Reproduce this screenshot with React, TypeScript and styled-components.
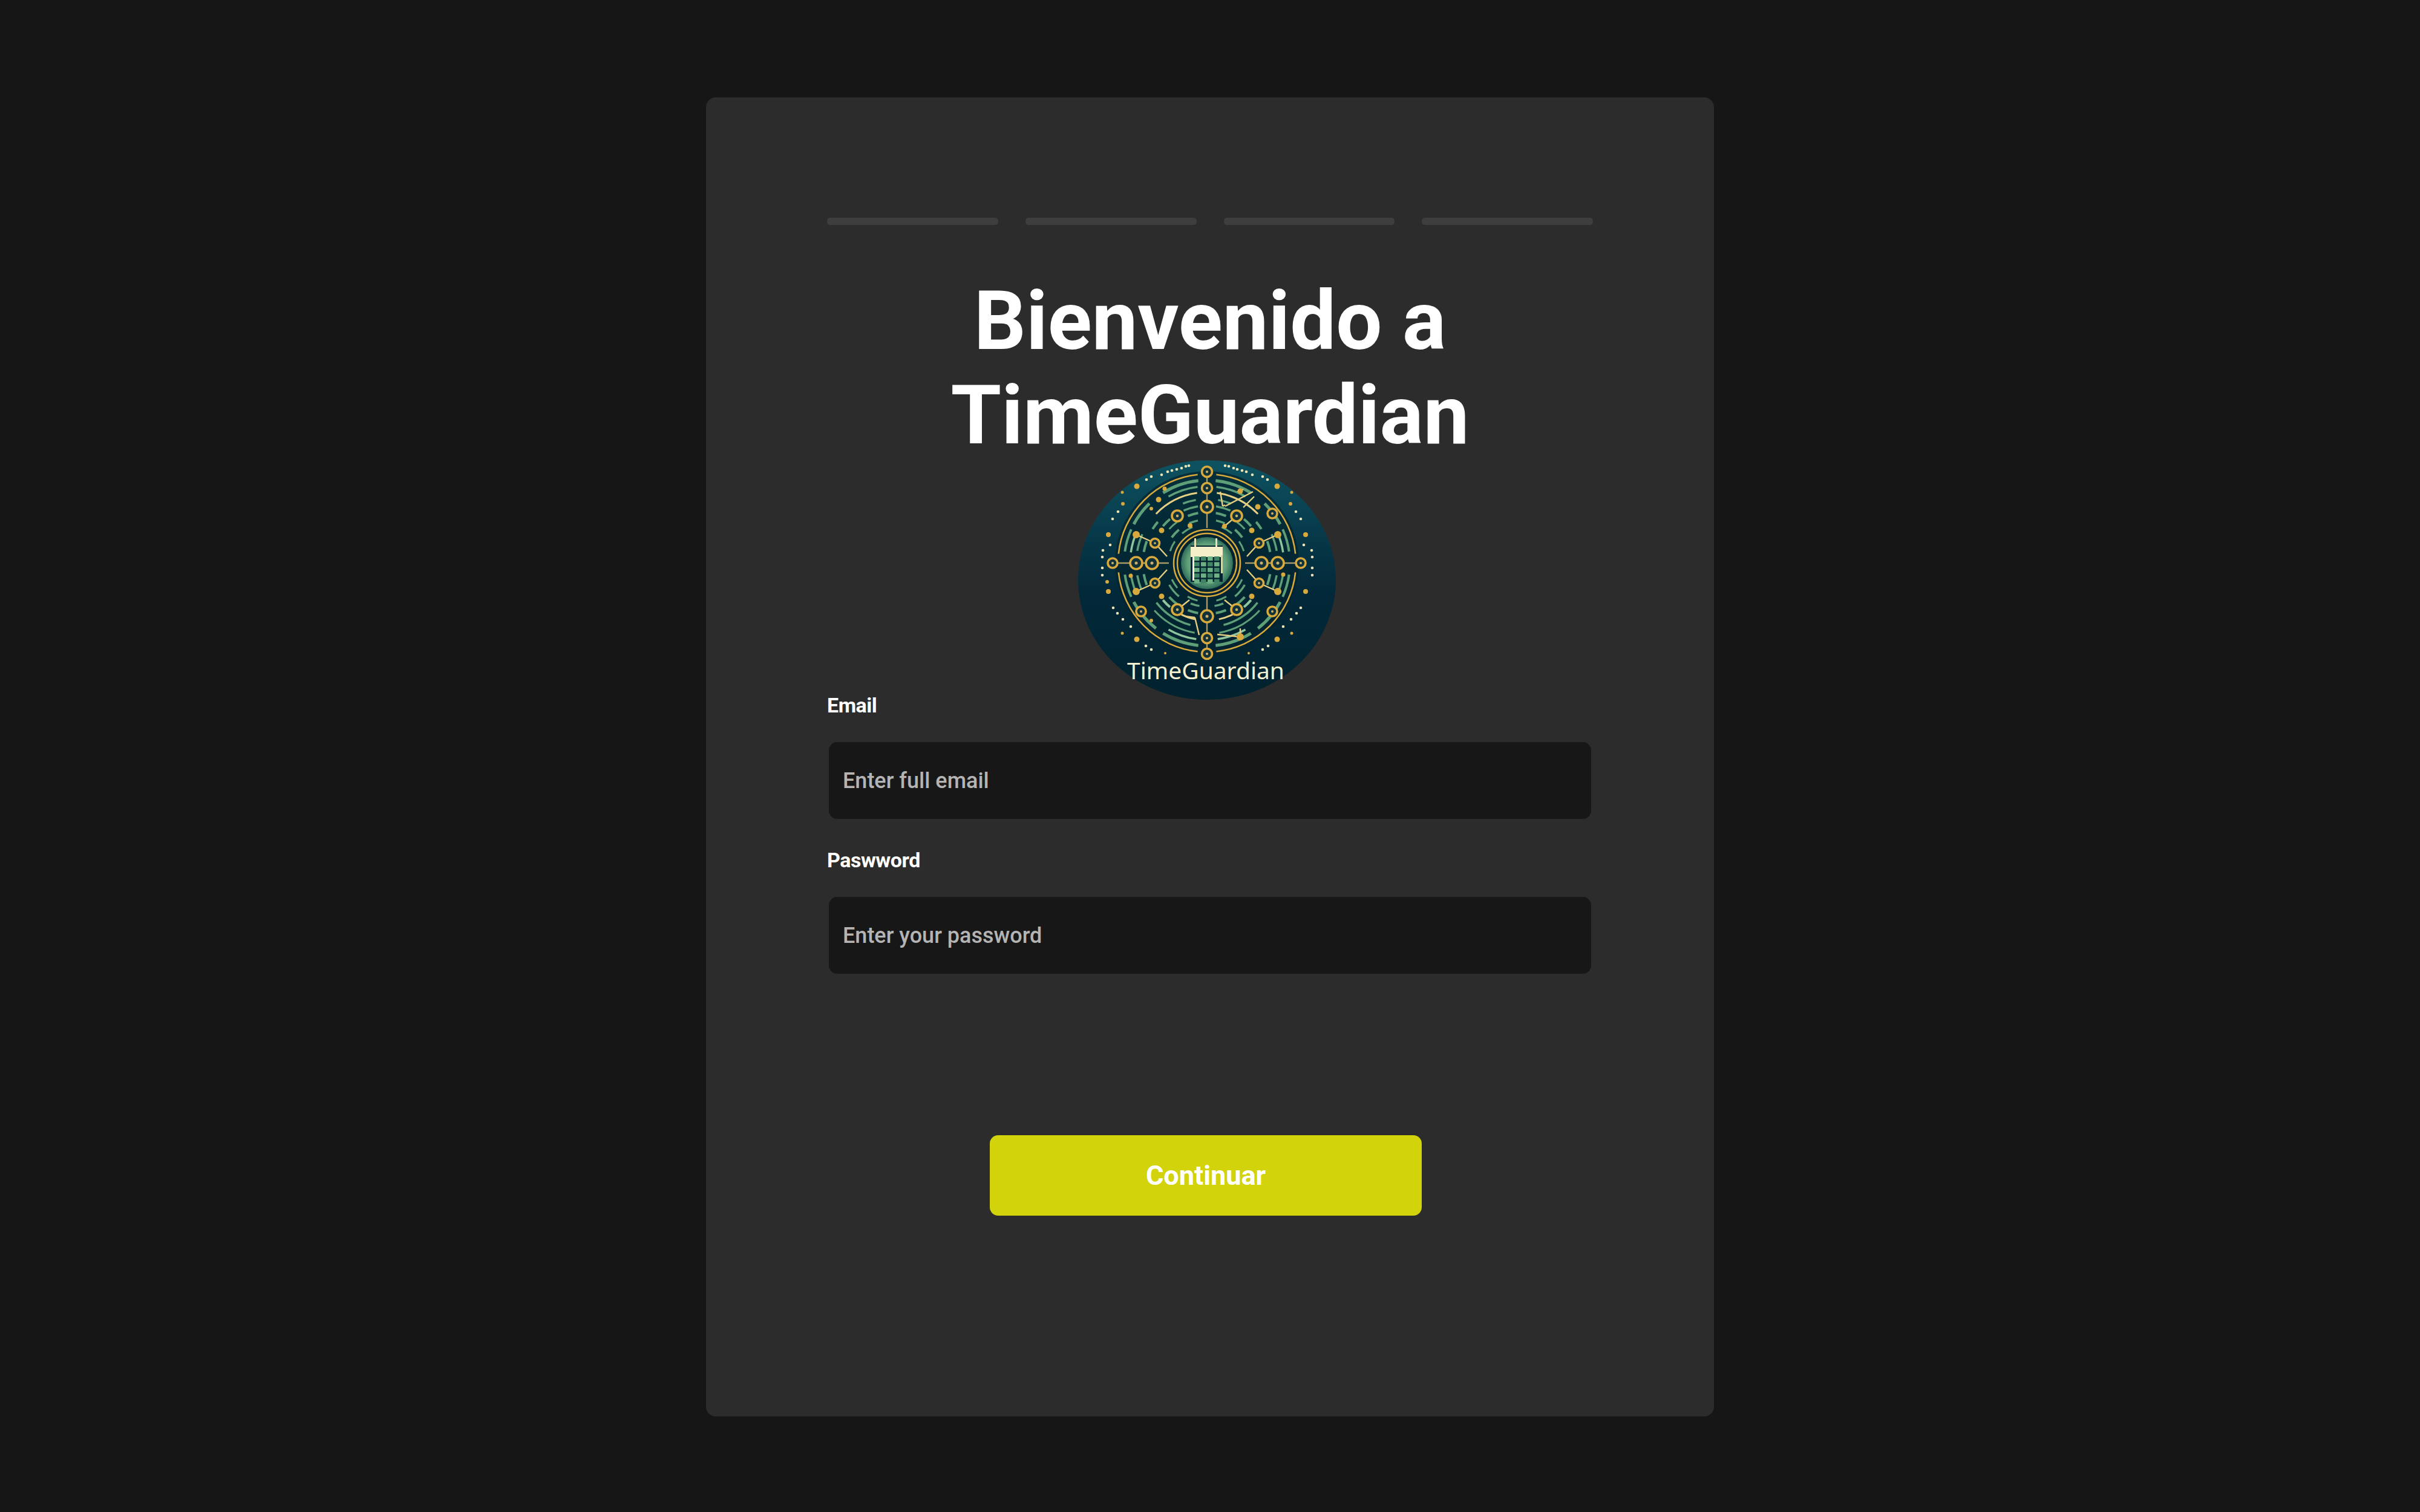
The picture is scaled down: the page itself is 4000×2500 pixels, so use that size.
import React from "react";
import styled, { createGlobalStyle } from "styled-components";

const Global = createGlobalStyle`
  html, body { margin: 0; padding: 0; background: #161616; }
  * { box-sizing: border-box; }
`;

const Page = styled.main`
  width: 4000px;
  height: 2500px;
  padding-top: 161px;
  background: #161616;
  font-family: Roboto, "Liberation Sans", sans-serif;
`;

const Card = styled.section`
  width: 1666px;
  height: 2181px;
  margin: 0 auto;
  padding: 199px 200px 0;
  background: #2c2c2c;
  border-radius: 16px;
`;

const Steps = styled.div`
  display: grid;
  grid-template-columns: repeat(4, 1fr);
  gap: 45px;
  margin-bottom: 81px;
`;

const Step = styled.span`
  height: 12px;
  border-radius: 5px;
  background: #3e3e3e;
`;

const Title = styled.h1`
  margin: 0 0 -5px;
  color: #ffffff;
  font-size: 135px;
  line-height: 156px;
  font-weight: 700;
  text-align: center;
`;

const LogoWrap = styled.div`
  width: 428px;
  height: 398px;
  margin-left: 414px;
`;

const Field = styled.div<{ $gap: number }>`
  margin-top: ${(p) => p.$gap}px;
`;

const Label = styled.label`
  display: block;
  color: #ffffff;
  font-size: 34px;
  line-height: 24px;
  font-weight: 700;
  letter-spacing: -0.5px;
`;

const Input = styled.input`
  display: block;
  width: 1260px;
  height: 127px;
  margin: 49px 3px 0;
  padding: 0 23px;
  border: none;
  outline: none;
  border-radius: 14px;
  background: #171717;
  color: #ffffff;
  font-family: inherit;
  font-size: 36px;
  font-weight: 500;
  &::placeholder {
    color: #b4b4b4;
    opacity: 1;
  }
`;

const Submit = styled.button`
  display: block;
  width: 714px;
  height: 133px;
  margin: 267px 0 0 269px;
  border: none;
  border-radius: 14px;
  background: #d3d30c;
  color: #ffffff;
  font-family: inherit;
  font-size: 45px;
  font-weight: 700;
`;

const CX = 214;
const CY = 171;
const GOLD = "#d8a93c";
const PALE = "#e6cf82";
const GREEN = "#5f9f78";
const LIGHT = "#8fc49c";

const pt = (r: number, deg: number): [number, number] => {
  const a = ((deg - 90) * Math.PI) / 180;
  return [CX + r * Math.cos(a), CY + r * Math.sin(a)];
};

const arc = (r: number, a0: number, a1: number) => {
  const [x0, y0] = pt(r, a0);
  const [x1, y1] = pt(r, a1);
  return `M${x0.toFixed(1)} ${y0.toFixed(1)}A${r} ${r} 0 ${a1 - a0 > 180 ? 1 : 0} 1 ${x1.toFixed(1)} ${y1.toFixed(1)}`;
};

type Band = [number, number, number, number, string];

const bands: Band[] = [
  [147, 6, 84, 2.6, GOLD],
  [147, 96, 174, 2.6, GOLD],
  [137, 6, 32, 5, GREEN],
  [137, 44, 62, 5, GREEN],
  [137, 66, 82, 4, GREEN],
  [137, 98, 114, 4, GREEN],
  [137, 118, 142, 5, GREEN],
  [137, 148, 174, 5, GREEN],
  [127, 7, 30, 3.5, GREEN],
  [127, 98, 112, 3.5, GREEN],
  [127, 66, 82, 3.5, LIGHT],
  [127, 150, 172, 3.5, LIGHT],
  [117, 8, 46, 3, PALE],
  [117, 66, 80, 3.5, GREEN],
  [117, 100, 112, 3.5, GREEN],
  [117, 132, 170, 3, GREEN],
  [106, 10, 22, 3.5, GREEN],
  [106, 50, 58, 4, GREEN],
  [106, 70, 80, 4, GREEN],
  [106, 100, 110, 4, GREEN],
  [106, 128, 165, 3.5, GREEN],
  [95, 9, 24, 3.5, GREEN],
  [95, 40, 50, 4, GREEN],
  [95, 130, 140, 4, LIGHT],
  [95, 150, 168, 3, PALE],
  [84, 10, 22, 4, GREEN],
  [84, 36, 48, 3, GREEN],
  [84, 132, 146, 4, GREEN],
  [84, 158, 170, 4, GREEN],
  [72, 12, 24, 3.5, GREEN],
  [72, 40, 54, 4, GREEN],
  [72, 120, 140, 3.5, GREEN],
  [72, 158, 170, 3.5, GREEN],
  [64, 22, 40, 3, GREEN],
  [64, 56, 72, 3, GREEN],
  [64, 115, 130, 3, GREEN],
  [64, 150, 166, 3, GREEN],
];

const mirror = (b: Band): Band[] => [
  b,
  [b[0], 360 - b[2], 360 - b[1], b[3], b[4]],
];

const ringNodes: [number, number, number][] = [
  [0, -151, 8.5], [0, -124, 8.5], [0, -93, 10], [0, 88, 10], [0, 124, 8.5], [0, 150, 8.5],
  [-156, 0, 8], [-117, 0, 10], [-91, 0, 10], [90, 0, 10], [117, 0, 10], [155, 0, 8],
  [-49, -78, 9], [49, -78, 9], [-49, 77, 9], [49, 77, 9],
  [108, -82, 8], [-109, 80, 8], [108, 80, 8],
  [-86, -33, 7.5], [86, -33, 7.5], [-86, 33, 7.5], [86, 33, 7.5],
];

const goldDots: [number, number, number][] = [
  [-117, -47, 6], [117, -47, 6], [-117, 47, 6], [117, 47, 6],
  [-75, -54, 4.5], [74, -54, 4.5], [-75, 55, 4.5], [74, 55, 4.5],
  [55, -119, 4.5], [-80, -105, 4.5], [84, -93, 4.5], [55, 122, 6],
  [-28, -62, 4], [29, -61, 4], [-70, -123, 3.5], [-92, -90, 3], [-92, 95, 3],
  [-126, 21, 3.5], [126, 19, 3.5],
  [-116, -127, 4.5], [116, -127, 4.5], [-116, 126, 4.5], [116, 126, 4.5],
  [-163, -47, 4], [163, -47, 4], [-163, 47, 4], [163, 47, 4],
  [-140, -117, 2.5], [140, -117, 2.5], [-140, 116, 2.5], [140, 116, 2.5],
  [-139, -98, 3], [138, -98, 3], [-165, 31, 3], [-69, 149, 2], [69, 149, 2],
];

const paleDots: [number, number][] = [
  [-30, -161], [-35, -160], [-42, -157], [-50, -155], [-58, -153], [-65, -151], [-75, -146], [-92, -143], [-100, -138],
  [30, -161], [36, -160], [44, -157], [50, -155], [58, -153], [65, -151], [75, -146], [92, -143], [100, -138],
  [-147, -85], [-156, -73], [147, -85], [155, -73],
  [-160, -30], [-172, -21], [-173, -10], [-173, 8], [-173, 20],
  [160, -30], [173, -21], [174, -10], [174, 8], [174, 20],
  [-155, 74], [-148, 83], [-139, 93], [-126, 105], [155, 74], [148, 83], [139, 93], [126, 105],
  [-101, 137], [-92, 143], [101, 137], [92, 143],
];

const links: [number, number, number, number][] = [
  [0, -143, 0, -132], [0, -114, 0, -103], [0, -83, 0, -58], [0, 56, 0, 78], [0, 98, 0, 114], [0, 134, 0, 142],
  [-147, 0, -127, 0], [-107, 0, -101, 0], [-81, 0, -63, 0],
  [63, 0, 80, 0], [100, 0, 107, 0], [127, 0, 146, 0],
  [-117, -47, -86, -33], [117, -47, 86, -33], [-117, 47, -86, 33], [117, 47, 86, 33],
  [-86, -33, -66, -11], [86, -33, 66, -11], [-86, 33, -66, 11], [86, 33, 66, 11],
  [49, -78, 29, -61], [-49, 77, -29, 61], [49, 77, 29, 61],
  [50, -118, 60, -122], [22, -118, 26, -94], [26, -94, 30, -96], [30, -94, 76, -118],
  [60, -92, 78, -110], [-36, 88, -20, 90], [-20, 90, -13, 119],
  [17, 118, 55, 122], [55, 122, 55, 108],
];

const cells = Array.from({ length: 20 }, (_, i) => ({
  x: CX - 21 + (i % 4) * 11,
  y: CY - 11 + Math.floor(i / 4) * 9.4,
  lit: (i + Math.floor(i / 4)) % 2 === 0,
}));

function Logo() {
  return (
    <svg width="428" height="398" viewBox="0 0 428 398" role="img" aria-label="TimeGuardian">
      <defs>
        <linearGradient id="disc" x1="0" y1="0" x2="0" y2="1">
          <stop offset="0" stopColor="#0e5361" />
          <stop offset="0.3" stopColor="#073a4a" />
          <stop offset="0.55" stopColor="#02293a" />
          <stop offset="1" stopColor="#01222e" />
        </linearGradient>
        <radialGradient id="core">
          <stop offset="0" stopColor="#9fd0a8" />
          <stop offset="0.75" stopColor="#5f9f78" />
          <stop offset="1" stopColor="#2f6d5a" />
        </radialGradient>
      </defs>
      <ellipse cx="214" cy="199" rx="213" ry="198" fill="url(#disc)" />
      <circle cx={CX} cy={CY} r="152" fill="#03242f" opacity="0.75" />
      {bands.flatMap(mirror).map((b, i) => (
        <path key={i} d={arc(b[0], b[1], b[2])} fill="none" stroke={b[4]} strokeWidth={b[3]} />
      ))}
      {links.map(([a, b, c, d], i) => (
        <line key={i} x1={CX + a} y1={CY + b} x2={CX + c} y2={CY + d} stroke={i < 12 ? "#a99c68" : PALE} strokeWidth="2.4" />
      ))}
      {paleDots.map(([x, y], i) => (
        <circle key={i} cx={CX + x} cy={CY + y} r="2.3" fill="#e9e3b6" />
      ))}
      {goldDots.map(([x, y, r], i) => (
        <circle key={i} cx={CX + x} cy={CY + y} r={r} fill={GOLD} />
      ))}
      {ringNodes.map(([x, y, r], i) => (
        <g key={i}>
          <circle cx={CX + x} cy={CY + y} r={r} fill="#12323a" stroke={GOLD} strokeWidth="3.6" />
          <circle cx={CX + x} cy={CY + y} r={r * 0.25} fill="#c9b06a" />
        </g>
      ))}
      <circle cx={CX} cy={CY} r="55" fill="#03242f" stroke={GOLD} strokeWidth="2.6" />
      <circle cx={CX} cy={CY} r="49" fill="none" stroke={GOLD} strokeWidth="2.4" />
      <circle cx={CX} cy={CY} r="43" fill="url(#core)" />
      <rect x={CX - 27} y={CY - 29} width="53" height="60" fill="#03242f" />
      <rect x={CX - 27} y={CY - 27} width="53" height="17" fill="#f4efc8" />
      <rect x={CX - 21} y={CY - 41} width="3" height="14" fill="#e6e0b4" />
      <rect x={CX + 14} y={CY - 41} width="3" height="14" fill="#e6e0b4" />
      <rect x={CX - 24} y={CY - 13} width="3" height="42" fill="#f4efc8" />
      <rect x={CX + 23} y={CY - 13} width="3" height="30" fill="#cfd8a8" />
      {cells.map((c, i) => (
        <rect key={i} x={c.x} y={c.y} width="8.6" height="7" fill={c.lit ? "#6db184" : "#3e8465"} />
      ))}
      <text
        x="212"
        y="363"
        textAnchor="middle"
        fontFamily="'Noto Sans', 'Open Sans', sans-serif"
        fontSize="39"
        fill="#f5f1cf"
      >
        TimeGuardian
      </text>
    </svg>
  );
}

export default function App() {
  return (
    <Page>
      <Global />
      <Card>
        <Steps>
          {[0, 1, 2, 3].map((i) => (
            <Step key={i} />
          ))}
        </Steps>
        <Title>
          Bienvenido a<br />
          TimeGuardian
        </Title>
        <LogoWrap>
          <Logo />
        </LogoWrap>
        <Field $gap={-4}>
          <Label htmlFor="email">Email</Label>
          <Input id="email" type="email" placeholder="Enter full email" />
        </Field>
        <Field $gap={56}>
          <Label htmlFor="password">Paswword</Label>
          <Input id="password" type="password" placeholder="Enter your password" />
        </Field>
        <Submit type="button">Continuar</Submit>
      </Card>
    </Page>
  );
}
